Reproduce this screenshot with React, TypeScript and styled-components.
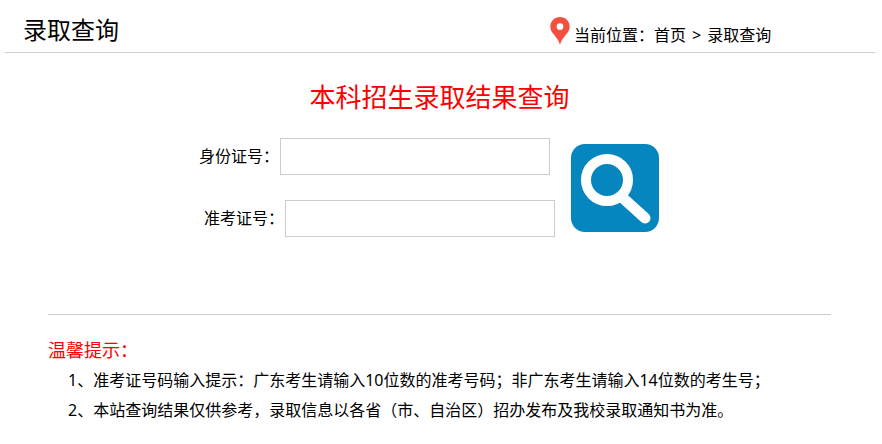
import styled, { createGlobalStyle } from 'styled-components';

const GlobalStyle = createGlobalStyle`
  html, body {
    margin: 0;
    padding: 0;
    background: #fff;
    color: #000;
    font-family: "Noto Sans", "Noto Sans CJK SC", "Liberation Sans", sans-serif;
  }
`

const Page = styled.div`
  width: 882px;
  height: 444px;
  overflow: hidden;
  padding: 0 7px 0 5px;
  box-sizing: border-box;
`

const Header = styled.div`
  height: 53px;
  border-bottom: 1px solid #ccc;
  box-sizing: border-box;
  display: flex;
  padding-left: 18px;
`

const PageName = styled.div`
  width: 527px;
  padding-top: 12px;
  font-size: 24px;
  line-height: 36px;
`

const Crumbs = styled.div`
  display: flex;
  align-items: flex-start;
  padding-top: 17px;
  font-size: 16px;
  line-height: 36px;
  white-space: pre;
`

const PinIcon = styled.svg`
  width: 20px;
  height: 28px;
  margin-right: 4px;
  flex: none;
`

const CrumbSeparator = styled.span`
  margin: 0 6px;
`

const Heading = styled.h1`
  margin: 0 0 0 -1px;
  padding-top: 24px;
  height: 85px;
  box-sizing: border-box;
  font-size: 26px;
  line-height: 40px;
  font-weight: 400;
  color: #f00;
  text-align: center;
`

const SearchArea = styled.div`
  display: flex;
  align-items: flex-start;
  height: 176px;
  padding-left: 194px;
`

const Fields = styled.div`
  display: flex;
  flex-direction: column;
  gap: 25px;
  width: 356px;
  flex: none;
  margin-right: 16px;
`

const FieldRow = styled.label<{ $indent: number }>`
  display: flex;
  align-items: center;
  margin-left: ${p => p.$indent}px;
  font-size: 16px;
`

const FieldLabel = styled.span`
  width: 81px;
  flex: none;
  padding-bottom: 3px;
`

const TextInput = styled.input`
  width: 270px;
  height: 37px;
  flex: none;
  box-sizing: border-box;
  border: 1px solid #ccc;
  outline: none;
  background: #fff;
`

const SearchButton = styled.button`
  width: 88px;
  height: 88px;
  padding: 0;
  margin-top: 6px;
  border: 0;
  background: none;
  flex: none;
`

const SearchGlyph = styled.svg`
  display: block;
`

const Tips = styled.div`
  margin: 0 44px 0 43px;
  border-top: 1px solid #ccc;
  padding-top: 21px;
  font-size: 16px;
`

const TipTitle = styled.div`
  color: #f00;
  font-size: 18px;
  line-height: 28px;
  margin-bottom: 1px;
`

const TipLine = styled.div`
  padding-left: 20px;
  line-height: 30px;
  white-space: nowrap;
`

const App = () => {
  return (
    <>
      <GlobalStyle />
      <Page>
        <Header>
          <PageName>录取查询</PageName>
          <Crumbs>
            <PinIcon viewBox="0 0 20 28">
              <path
                fill="#f5503f"
                fillRule="evenodd"
                d="M10 0C4.600 0 .3 4.200.3 9.600c0 2.300.8 4.200 2 6C4.800 19 8.600 22.500 10 28c1.400-5.500 5.200-9 7.700-12.400 1.200-1.800 2-3.700 2-6C19.700 4.200 15.400 0 10 0zm0 6.200a3.400 3.400 0 1 1 0 6.800 3.400 3.400 0 0 1 0-6.800z"
              />
            </PinIcon>
            <span>当前位置：首页<CrumbSeparator>&gt;</CrumbSeparator>录取查询</span>
          </Crumbs>
        </Header>
        <Heading>本科招生录取结果查询</Heading>
        <SearchArea>
          <Fields>
            <FieldRow $indent={0}>
              <FieldLabel>身份证号：</FieldLabel>
              <TextInput type="text" />
            </FieldRow>
            <FieldRow $indent={5}>
              <FieldLabel>准考证号：</FieldLabel>
              <TextInput type="text" />
            </FieldRow>
          </Fields>
          <SearchButton type="button" aria-label="查询">
            <SearchGlyph width="88" height="88" viewBox="0 0 88 88">
              <rect width="88" height="88" rx="14" fill="#0686bf" />
              <circle cx="36" cy="36" r="21" fill="none" stroke="#fff" strokeWidth="10" />
              <path d="M53 55 L74 74" stroke="#fff" strokeWidth="11" strokeLinecap="round" />
            </SearchGlyph>
          </SearchButton>
        </SearchArea>
        <Tips>
          <TipTitle>温馨提示：</TipTitle>
          <TipLine>1、准考证号码输入提示：广东考生请输入10位数的准考号码；非广东考生请输入14位数的考生号；</TipLine>
          <TipLine>2、本站查询结果仅供参考，录取信息以各省（市、自治区）招办发布及我校录取通知书为准。</TipLine>
        </Tips>
      </Page>
    </>
  );
}

export default App;
